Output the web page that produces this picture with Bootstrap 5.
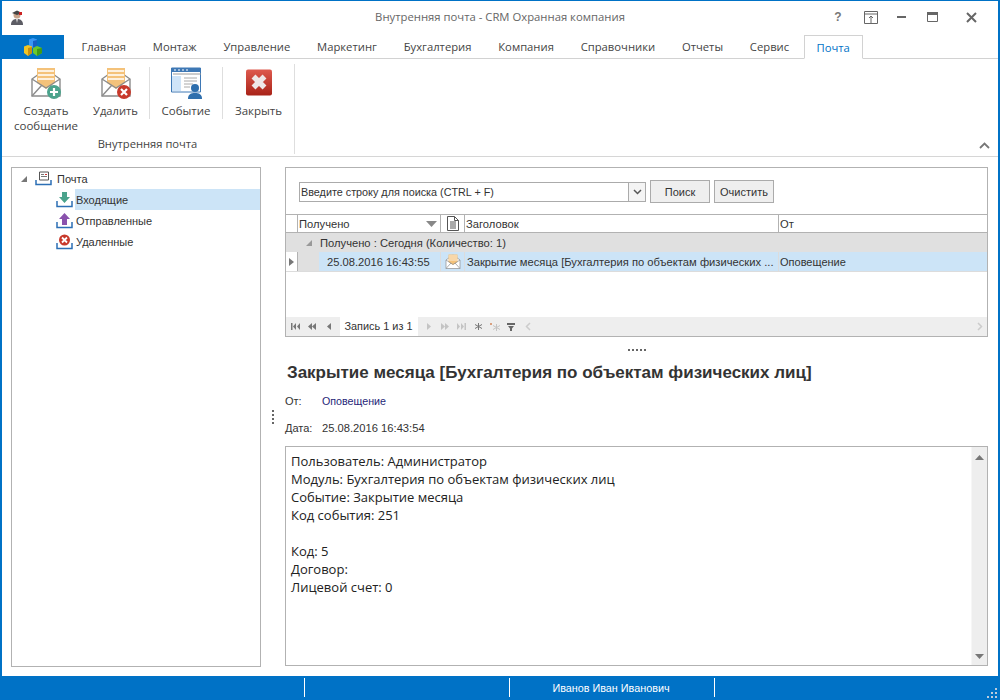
<!DOCTYPE html>
<html lang="ru"><head><meta charset="utf-8"><title>Внутренняя почта</title>
<link href="https://cdn.jsdelivr.net/npm/bootstrap@5.3.0/dist/css/bootstrap.min.css" rel="stylesheet">
<style>
html,body{margin:0;height:700px;overflow:hidden;background:#fff}
.wnd{width:1000px;height:700px;border-top:1px solid #0072c6;border-left:2px solid #0072c6;border-right:2px solid #0072c6;color:#3b3b3b;font-family:"Open Sans","Noto Sans",sans-serif;font-size:11.5px}
.ttl{height:34px;color:#666;font-size:11.3px;padding-bottom:2px}
.ttl-ico{width:24px;padding-left:8px}
.ttl-c{width:172px;padding-right:12px}
.ctl{flex:none;display:flex;justify-content:center}
.tabs{height:24px;border-bottom:1px solid #d2d2d2}
.logo-t{width:62px;height:24px;background:#0072c6}
.tb{padding:0 13.4px;line-height:24px;color:#444;white-space:nowrap;font-size:11.25px}
.tb-on{height:24px;border:1px solid #d2d2d2;border-bottom-color:#fff;color:#0072c6;margin-left:1px;padding:0 12px}
.rib{height:98px;border-bottom:1px solid #d6d6d6;position:relative}
.rgrp{width:293px;margin-top:5px;height:90px;border-right:1px solid #dedede;padding-left:8px}
.ritem{text-align:center;padding-top:3px;line-height:15px;color:#444}
.ritem svg{display:block;margin:0 auto 4px}
.sep{width:1px;height:52px;margin-top:3px;background:#dedede}
.glab{text-align:center;color:#444;width:275px;margin-top:4px;font-size:11.2px}
.colps{position:absolute;right:8px;bottom:7px}
.mainp{height:510px;padding:10px 10px 0 9px;font-family:"Liberation Sans",sans-serif;font-size:11.2px;color:#333}
.tree{width:250px;height:500px;border:1px solid #b2b2b2;font-size:11px}
.trow{height:21px;display:flex;align-items:center}
.tlab{flex:1;height:21px;line-height:22px;padding-left:1px}
.tsel{background:#cce4f7}
.vsp{width:24px;display:flex;flex-direction:column;align-items:center;justify-content:center;gap:2px}
.vsp i,.hsp i{display:block;width:2px;height:2px;background:#666}
.right{width:703px;height:500px}
.grid-b{height:170px;border:1px solid #b2b2b2}
.sbar{height:46px;padding:12px 0 0 13px;gap:4px}
.combo{width:347px;height:20px;border:1px solid #ababab;margin-top:2px;line-height:18px;padding-left:1px;position:relative;font-size:10.8px}
.combo b{position:absolute;right:0;top:0;height:18px;width:17px;border-left:1px solid #ababab;display:flex;align-items:center;justify-content:center;background:#f4f4f4}
.gbtn{width:60px;height:23px;padding:0;border:1px solid #ababab;border-radius:0;background:#efefef;color:#333;font-size:11px;line-height:20px}
.gbtn:hover{background:#efefef;color:#333;border-color:#ababab}
.grow{display:flex}
.ghead{height:19px;border-top:1px solid #b2b2b2;border-bottom:1px solid #b2b2b2;line-height:18px}
.c0{width:12px;border-right:1px solid #b2b2b2;flex:none}
.c1{width:143px;border-right:1px solid #b2b2b2;flex:none;padding-left:1px;position:relative}
.c2{width:24px;border-right:1px solid #b2b2b2;flex:none;display:flex;align-items:center;justify-content:center}
.c3{width:314px;border-right:1px solid #b2b2b2;flex:none;padding-left:1px;white-space:nowrap}
.c4{flex:1;padding-left:1px}
.ggroup{height:19px;background:#e0e0e0;line-height:20px}
.gdata{height:20px;line-height:20px;border-bottom:1px solid #dcdcdc}
.ind{width:12px;flex:none;border-right:1px solid #b2b2b2;display:flex;align-items:center;justify-content:center}
.ind2{width:21px;flex:none;background:#e0e0e0}
.d1{width:122px;flex:none;background:#cce4f7;padding-left:8px;border-right:1px solid #dcdcdc}
.d2{width:24px;flex:none;background:#cce4f7;border-right:1px solid #dcdcdc;display:flex;align-items:center;justify-content:center}
.d3{width:314px;flex:none;background:#cce4f7;border-right:1px solid #dcdcdc;padding-left:2px;white-space:nowrap}
.d4{flex:1;background:#cce4f7;padding-left:1px;font-size:11px}
.gfill{height:45px}
.gnav{height:19px;background:#eee;padding-left:3px;font-size:10.9px}
.nav-b{width:13px;display:flex;justify-content:center;margin-right:3.500px}
.rec{background:#fff;width:78px;height:19px;line-height:19px;text-align:center;margin:0 4.500px 0 1px}
.hsp{height:23px;display:flex;justify-content:center;align-items:center;gap:2px;padding-top:2px}
.mtitle{font-size:17px;font-weight:700;line-height:20px;color:#333;margin:3px 0 0 2px;white-space:nowrap}
.meta{margin-top:10px;line-height:16px;height:16px;font-size:11px}
.meta-l{width:37px}
.mbody{height:220px;border:1px solid #b2b2b2;position:relative;padding:5px 5px;font:13px/18px "Open Sans","Noto Sans",sans-serif;color:#222}
.mbody p{margin:0;min-height:18px}
.scr{position:absolute;right:0;top:0;bottom:0;width:16px;background:#eee;border-left:1px solid #f6f6f6;display:flex;flex-direction:column;justify-content:space-between;align-items:center;padding:8px 0 6px}
.stat{height:24px;background:#0072c6;color:#fff;position:relative}
.scell{border-left:1px solid #fff;height:19px;margin-top:2px;width:205px;text-align:center;line-height:20px;font-family:"Liberation Sans",sans-serif;font-size:10.8px;padding-right:2px}
.grip{position:absolute;right:1px;bottom:2px}
</style></head><body>
<svg width="0" height="0" class="d-none"><defs>
<symbol id="env" viewBox="0 0 32 32">
<path d="M2 12 16 2l14 10v17H2z" fill="#fff" stroke="#8c8c8c" stroke-width="1.4"/>
<path d="M7 1h18v15l-9 6-9-6z" fill="#f4c27a"/>
<path d="M8 4h16M8 8h16M8 12h16" stroke="#fff" stroke-width="1.4"/>
<path d="M2 12l14 9 14-9M2 29l10-11M30 29 20 18" fill="none" stroke="#8c8c8c" stroke-width="1.4"/>
</symbol></defs></svg>
<div class="wnd d-flex flex-column">
 <div class="ttl d-flex align-items-center">
  <div class="ttl-ico"><svg width="14" height="16" viewBox="0 0 14 16"><circle cx="7" cy="6" r="3.5" fill="#c9a58c"/><path d="M2 4 7 1.500l5 2.500-5 2z" fill="#444"/><path d="M9 3h3v3H9z" fill="#c22"/><path d="M1 16c0-5 3-6 6-6s6 1 6 6z" fill="#5c5c64"/><path d="M6 10h2l-1 4z" fill="#ddd"/></svg></div>
  <div class="flex-grow-1 text-center" style="padding-left:148px">Внутренняя почта - CRM Охранная компания</div>
  <div class="d-flex ttl-c align-items-center">
   <div class="ctl" style="width:24px;font-weight:700;color:#777;font-size:12px;font-family:'Liberation Sans',sans-serif">?</div>
   <div class="ctl" style="width:41px"><svg width="14" height="13" viewBox="0 0 14 13"><path d="M.5.500h13v12H.5zM.5 3h13M7 12V5M5 7l2-2 2 2" fill="none" stroke="#666"/></svg></div>
   <div class="ctl" style="width:20px"><svg width="9" height="4" viewBox="0 0 9 4"><path d="M0 1h9v2H0z" fill="#666"/></svg></div>
   <div class="ctl" style="width:42px"><svg width="11" height="10" viewBox="0 0 11 10"><path d="M.5.500h10v9H.5z" fill="none" stroke="#666"/><path d="M0 0h11v3H0z" fill="#666"/></svg></div>
   <div class="ctl" style="width:37px"><svg width="11" height="11" viewBox="0 0 11 11"><path d="M1 1l9 9M10 1l-9 9" stroke="#666" stroke-width="2"/></svg></div>
  </div>
 </div>
 <div class="tabs d-flex">
  <div class="logo-t d-flex align-items-center justify-content-center"><svg width="20" height="18" viewBox="0 0 20 18"><path d="M6 1.500 10 0l4 1.500V8l-4 2-4-2z" fill="#3a97f5"/><path d="M10 3v7l4-2V2z" fill="#1660c4"/><path d="M1 8.500 5 7l4 1.500V15l-4 3-4-3z" fill="#f2c524"/><path d="M5 10v8l4-3V9z" fill="#c98f10"/><path d="M10 10l4-2 5 2v5l-5 3-4-3z" fill="#6cc92c"/><path d="M14 11v7l5-3v-5z" fill="#3f9a18"/></svg></div>
  <div class="d-flex ms-1"><div class="tb">Главная</div><div class="tb">Монтаж</div><div class="tb">Управление</div><div class="tb">Маркетинг</div><div class="tb">Бухгалтерия</div><div class="tb">Компания</div><div class="tb">Справочники</div><div class="tb">Отчеты</div><div class="tb">Сервис</div><div class="tb tb-on">Почта</div></div>
 </div>
 <div class="rib d-flex">
  <div class="rgrp d-flex flex-column">
   <div class="d-flex" style="height:68px">
    <div class="ritem" style="width:72px"><svg width="32" height="32" viewBox="0 0 32 32"><use href="#env"/><circle cx="24" cy="25" r="7" fill="#4ba38c"/><path d="M24 21v8M20 25h8" stroke="#fff" stroke-width="2.200"/></svg>Создать<br>сообщение</div>
    <div class="ritem" style="width:67px;font-size:11.2px"><svg width="32" height="32" viewBox="0 0 32 32"><use href="#env"/><circle cx="24" cy="25" r="7" fill="#c8392b"/><path d="M21 22l6 6M27 22l-6 6" stroke="#fff" stroke-width="2.200"/></svg>Удалить</div>
    <div class="sep"></div>
    <div class="ritem" style="width:72px"><svg width="32" height="32" viewBox="0 0 32 32"><path d="M1.500 1h29v24h-29z" fill="#fff" stroke="#3e78b5"/><path d="M1 1h30v4H1z" fill="#3e78b5"/><path d="M3 7h28" stroke="#9a9a9a"/><path d="M4 3h2M8 3h2M12 3h2M16 3h2" stroke="#fff"/><path d="M2 9h9v15H2z" fill="#cfe4f8"/><path d="M14 11h13M14 14h13M14 17h9M14 20h6" stroke="#aaa"/><circle cx="25" cy="21" r="4" fill="#2f6fad"/><path d="M18 32c0-5 3-6 7-6s7 1 7 6z" fill="#2f6fad"/></svg>Событие</div>
    <div class="sep"></div>
    <div class="ritem" style="width:71px"><svg width="28" height="32" viewBox="0 0 28 32"><defs><linearGradient id="rd" x1="0" y1="0" x2="0" y2="1"><stop offset="0" stop-color="#de5a4e"/><stop offset="1" stop-color="#a92318"/></linearGradient></defs><rect x="1" y="2.500" width="26" height="26" rx="2" fill="url(#rd)"/><path d="M8.500 9.500l11 11M19.500 9.500l-11 11" stroke="#efe8e8" stroke-width="5.500"/></svg>Закрыть</div>
   </div>
   <div class="glab">Внутренняя почта</div>
  </div>
  <svg class="colps" width="11" height="7" viewBox="0 0 11 7"><path d="M1 6l4.500-4.500L10 6" fill="none" stroke="#777" stroke-width="1.800"/></svg>
 </div>
 <div class="mainp d-flex">
  <div class="tree">
   <div class="trow"><svg style="margin:0 8px 0 9px" width="6" height="6" viewBox="0 0 6 6"><path d="M6 0v6H0z" fill="#777"/></svg>
    <svg class="me-1" width="17" height="15" viewBox="0 0 17 15"><path d="M4.500 1h9v8h-9z" fill="#fff" stroke="#555"/><path d="M6 3h3v1H6zM6 5h6v1H6z" fill="#777"/><path d="M10 3h2v1h-2z" fill="#c33"/><path d="M1 9v4.500h15V9" fill="none" stroke="#2c6fb5" stroke-width="1.500"/></svg><div class="tlab" style="flex:none">Почта</div></div>
   <div class="trow"><svg style="margin-left:44px;margin-right:2px" width="17" height="16" viewBox="0 0 17 16"><path d="M6 0h5v5h3l-5.500 6L3 5h3z" fill="#4ba38c"/><path d="M1 9v5.500h15V9" fill="none" stroke="#2c6fb5" stroke-width="1.500"/></svg><div class="tlab tsel">Входящие</div></div>
   <div class="trow"><svg style="margin-left:44px;margin-right:2px" width="17" height="16" viewBox="0 0 17 16"><path d="M6 12h5V6h3L8.500 0 3 6h3z" fill="#8a52ad"/><path d="M1 9v5.500h15V9" fill="none" stroke="#2c6fb5" stroke-width="1.500"/></svg><div class="tlab">Отправленные</div></div>
   <div class="trow"><svg style="margin-left:44px;margin-right:2px" width="17" height="16" viewBox="0 0 17 16"><path d="M1 9v5.500h15V9" fill="none" stroke="#2c6fb5" stroke-width="1.500"/><circle cx="8.500" cy="6" r="5.500" fill="#c8392b"/><path d="M6 3.500l5 5M11 3.500l-5 5" stroke="#fff" stroke-width="1.800"/></svg><div class="tlab">Удаленные</div></div>
  </div>
  <div class="vsp"><i></i><i></i><i></i><i></i></div>
  <div class="right">
   <div class="grid-b">
    <div class="d-flex sbar"><div class="combo">Введите строку для поиска (CTRL + F)<b><svg width="9" height="6" viewBox="0 0 9 6"><path d="M1 1l3.500 3.500L8 1" fill="none" stroke="#555" stroke-width="1.500"/></svg></b></div><button class="btn gbtn">Поиск</button><button class="btn gbtn">Очистить</button></div>
    <div class="grow ghead"><div class="c0"></div><div class="c1">Получено<svg style="position:absolute;right:3px;top:6px" width="11" height="6" viewBox="0 0 11 6"><path d="M0 0h11L5.500 6z" fill="#888"/></svg></div><div class="c2"><svg width="12" height="15" viewBox="0 0 12 15"><path d="M.5.500h7l4 4v10H.5zM3 6h6M3 8h6M3 10h6M3 12h6M7.500.500v4h4" fill="#fff" stroke="#555"/></svg></div><div class="c3">Заголовок</div><div class="c4">От</div></div>
    <div class="grow ggroup"><div style="width:22px;flex:none;padding:7px 0 0 8px;height:19px;margin-left:12px"><svg class="d-block" width="6" height="6" viewBox="0 0 6 6"><path d="M6 0v6H0z" fill="#999"/></svg></div><div>Получено : Сегодня (Количество: 1)</div></div>
    <div class="grow gdata"><div class="ind"><svg width="5" height="8" viewBox="0 0 5 8"><path d="M0 0l5 4-5 4z" fill="#777"/></svg></div><div class="ind2"></div><div class="d1">25.08.2016 16:43:55</div><div class="d2"><svg width="16" height="16" viewBox="0 0 32 32"><use href="#env"/></svg></div><div class="d3">Закрытие месяца [Бухгалтерия по объектам физических ...</div><div class="d4">Оповещение</div></div>
    <div class="gfill"></div>
    <div class="gnav d-flex align-items-center">
     <div class="nav-b"><svg width="9" height="7" viewBox="0 0 9 7"><path d="M0 0h1.500v7H0zM5 0v7L2 3.500zM9 0v7L6 3.500z" fill="#777"/></svg></div>
     <div class="nav-b"><svg width="8" height="7" viewBox="0 0 8 7"><path d="M4 0v7L0 3.500zM8 0v7L4 3.500z" fill="#777"/></svg></div>
     <div class="nav-b"><svg width="4" height="7" viewBox="0 0 4 7"><path d="M4 0v7L0 3.500z" fill="#777"/></svg></div>
     <div class="rec">Запись 1 из 1</div>
     <div class="nav-b"><svg width="4" height="7" viewBox="0 0 4 7"><path d="M0 0v7l4-3.500z" fill="#c4c4c4"/></svg></div>
     <div class="nav-b"><svg width="8" height="7" viewBox="0 0 8 7"><path d="M0 0v7l4-3.500zM4 0v7l4-3.500z" fill="#c4c4c4"/></svg></div>
     <div class="nav-b"><svg width="9" height="7" viewBox="0 0 9 7"><path d="M0 0v7l3-3.500zM4 0v7l3-3.500zM7.500 0H9v7H7.500z" fill="#c4c4c4"/></svg></div>
     <div class="nav-b"><svg width="7" height="7" viewBox="0 0 7 7"><path d="M3.500 0v7M0 1.500l7 4M7 1.500l-7 4" stroke="#777"/></svg></div>
     <div class="nav-b"><svg width="10" height="8" viewBox="0 0 10 8"><path d="M6.500 1v7M3 2.500l7 4M10 2.500l-7 4" stroke="#c4c4c4"/><path d="M0 0h2v2H0z" fill="#d9a080"/></svg></div>
     <div class="nav-b"><svg width="8" height="8" viewBox="0 0 8 8"><path d="M0 0h8v2H0zM1 3h6L5 5.500V8H3V5.500z" fill="#666"/></svg></div>
     <div class="nav-b"><svg width="6" height="9" viewBox="0 0 6 9"><path d="M5 1L1.500 4.500 5 8" fill="none" stroke="#ccc" stroke-width="1.500"/></svg></div>
     <div class="ms-auto me-1"><svg width="6" height="9" class="d-block" viewBox="0 0 6 9"><path d="M1 1l3.500 3.500L1 8" fill="none" stroke="#ccc" stroke-width="1.500"/></svg></div>
    </div>
   </div>
   <div class="hsp"><i></i><i></i><i></i><i></i><i></i></div>
   <div class="mtitle">Закрытие месяца [Бухгалтерия по объектам физических лиц]</div>
   <div class="meta d-flex"><div class="meta-l">От:</div><div style="color:#1f1f78;font-size:10.7px">Оповещение</div></div>
   <div class="meta d-flex" style="margin-top:11px;height:18px"><div class="meta-l">Дата:</div><div style="font-size:11.2px">25.08.2016 16:43:54</div></div>
   <div class="mbody" style="margin-top:8px">
    <p>Пользователь: Администратор</p><p>Модуль: Бухгалтерия по объектам физических лиц</p><p>Событие: Закрытие месяца</p><p>Код события: 251</p><p></p><p>Код: 5</p><p>Договор:</p><p>Лицевой счет: 0</p>
    <div class="scr"><svg width="9" height="5" viewBox="0 0 9 5"><path d="M4.500 0L9 5H0z" fill="#777"/></svg><svg width="9" height="5" viewBox="0 0 9 5"><path d="M0 0h9L4.500 5z" fill="#777"/></svg></div>
   </div>
  </div>
 </div>
 <div class="stat d-flex mt-auto">
  <div style="width:302px"></div><div class="scell"></div><div class="scell">Иванов Иван Иванович</div><div class="scell"></div>
  <svg class="grip" width="10" height="10" viewBox="0 0 10 10"><path d="M8 0h2v2H8zM4 4h2v2H4zM8 4h2v2H8zM0 8h2v2H0zM4 8h2v2H4zM8 8h2v2H8z" fill="#bcd"/></svg>
 </div>
</div>
</body></html>
